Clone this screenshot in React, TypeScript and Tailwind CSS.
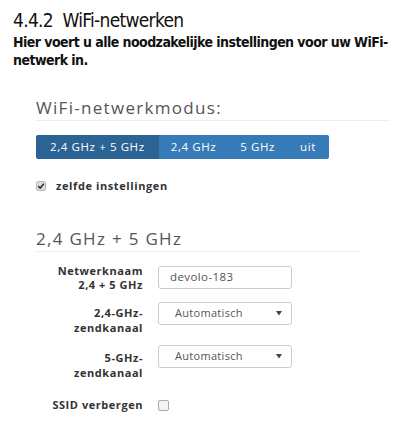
import React from "react";

const cond = { fontFamily: '"DejaVu Sans Condensed", "DejaVu Sans", sans-serif' };

function Select() {
  return (
    <div className="ml-[15px] w-[134px] h-[23px] border border-[#ccc] rounded-[3px] text-[11px] tracking-[0.3px] font-normal text-[#555] flex items-center pl-[16px] pr-[9px] justify-between shrink-0">
      <span>Automatisch</span>
      <svg width="6" height="5" viewBox="0 0 6 5"><path d="M0 0 H6 L3 4.5 Z" fill="#444" /></svg>
    </div>
  );
}

export default function App() {
  return (
    <div className="w-[404px] h-[440px] bg-white overflow-hidden">
      <div className="pl-[13px] pt-[8px]" style={cond}>
        <div className="text-[19px] leading-[24px] tracking-[-0.7px] text-[#111]">4.4.2&nbsp;&nbsp;WiFi-netwerken</div>
        <div className="text-[14px] leading-[18px] font-bold tracking-[-0.55px] text-[#111] mt-[1px]">
          Hier voert u alle noodzakelijke instellingen voor uw WiFi-
          <br />
          netwerk in.
        </div>
      </div>
      <div className="pl-[36px] font-['Open_Sans',sans-serif]">
        <div className="mt-[29px] w-[354px] text-[17px] leading-[20px] tracking-[1.3px] text-[#555] pb-[2px] border-b border-[#eee]">WiFi-netwerkmodus:</div>
        <div className="flex mt-[14px] h-[24px] text-[11.5px] tracking-[0.6px] text-white w-fit rounded-[2px] overflow-hidden">
          <div className="bg-[#2b6394] px-[14px] flex items-center">2,4 GHz + 5 GHz</div>
          <div className="bg-[#367ab8] px-[12px] flex items-center">2,4 GHz</div>
          <div className="bg-[#367ab8] px-[12px] flex items-center">5 GHz</div>
          <div className="bg-[#367ab8] px-[13px] flex items-center">uit</div>
        </div>
        <div className="flex items-center mt-[19px] gap-[10px]">
          <div className="w-[10px] h-[10px] rounded-[2px] bg-[#ddd] border border-[#bbb] flex items-center justify-center">
            <svg width="8" height="8" viewBox="0 0 8 8"><path d="M1.2 4.2 L3.2 6 L6.8 1.8" stroke="#333" strokeWidth="1.6" fill="none" /></svg>
          </div>
          <div className="text-[11px] tracking-[0.6px] font-bold text-[#333]">zelfde instellingen</div>
        </div>
        <div className="mt-[34px] w-[324px] text-[17px] leading-[20px] tracking-[1.3px] text-[#555] pb-[2px] border-b border-[#eee]">2,4 GHz + 5 GHz</div>
        <div className="mt-[14px] flex flex-col text-[11px] tracking-[0.55px] font-bold text-[#333]">
          <div className="flex items-start h-[36px]">
            <div className="w-[107px] text-right leading-[14px] mt-[-2px]">Netwerknaam<br />2,4 + 5 GHz</div>
            <div className="ml-[15px] w-[134px] h-[23px] border border-[#ccc] rounded-[3px] text-[11.5px] tracking-[0.4px] font-normal text-[#555] flex items-center pl-[11px] shrink-0">devolo-183</div>
          </div>
          <div className="flex items-start h-[43px]">
            <div className="w-[107px] text-right leading-[15px] pt-[3px]">2,4-GHz-<br />zendkanaal</div>
            <Select />
          </div>
          <div className="flex items-start h-[55px]">
            <div className="w-[107px] text-right leading-[15px] pt-[5px]">5-GHz-<br />zendkanaal</div>
            <Select />
          </div>
          <div className="flex items-center h-[11px]">
            <div className="w-[107px] text-right">SSID verbergen</div>
            <div className="ml-[15px] w-[11px] h-[11px] rounded-[2px] bg-[#f4f4f4] border border-[#aaa] shrink-0"></div>
          </div>
        </div>
      </div>
    </div>
  );
}
